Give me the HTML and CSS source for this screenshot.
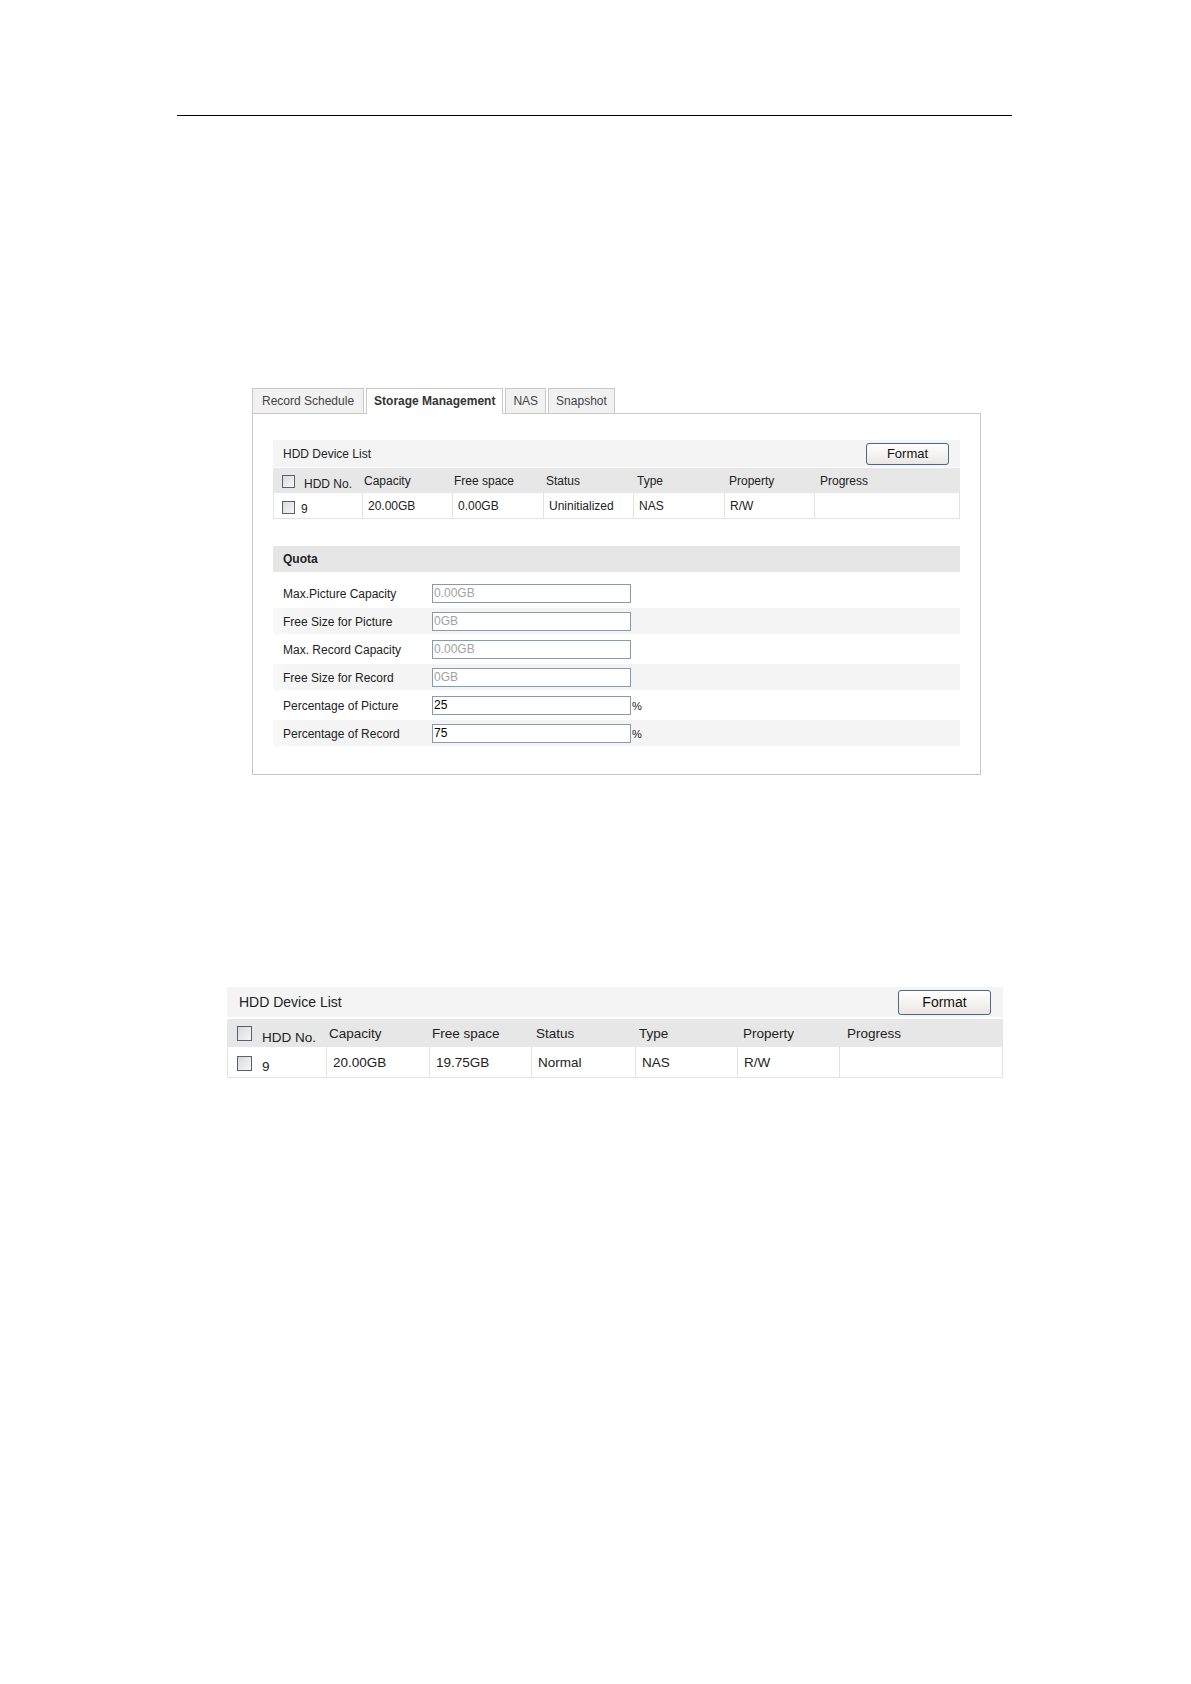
FILE: index.html
```html
<!DOCTYPE html>
<html>
<head>
<meta charset="utf-8">
<title>Storage Management</title>
<link rel="stylesheet" href="styles.css">
</head>
<body>
<div class="page">
  <hr class="rule">

  <div class="fig1">
    <div class="tabs">
      <div class="tab first">Record Schedule</div>
      <div class="tab active">Storage Management</div>
      <div class="tab">NAS</div>
      <div class="tab">Snapshot</div>
    </div>
    <div class="panel">
      <div class="devlist">
        <div class="dl-head">
          <span class="dl-title">HDD Device List</span>
          <button class="btn">Format</button>
        </div>
        <div class="dl-th">
          <div class="c c1"><span class="cb"></span><span class="hddno">HDD No.</span></div>
          <div class="c">Capacity</div>
          <div class="c">Free space</div>
          <div class="c">Status</div>
          <div class="c">Type</div>
          <div class="c">Property</div>
          <div class="c">Progress</div>
        </div>
        <div class="dl-td">
          <div class="c c1"><span class="cb"></span><span class="num">9</span></div>
          <div class="c">20.00GB</div>
          <div class="c">0.00GB</div>
          <div class="c">Uninitialized</div>
          <div class="c">NAS</div>
          <div class="c">R/W</div>
          <div class="c"></div>
        </div>
      </div>

      <div class="quota">
        <div class="q-head">Quota</div>
        <div class="q-rows">
          <div class="q-row"><span class="q-label">Max.Picture Capacity</span><input class="q-input" value="0.00GB" disabled></div>
          <div class="q-row alt"><span class="q-label">Free Size for Picture</span><input class="q-input" value="0GB" disabled></div>
          <div class="q-row"><span class="q-label">Max. Record Capacity</span><input class="q-input" value="0.00GB" disabled></div>
          <div class="q-row alt"><span class="q-label">Free Size for Record</span><input class="q-input" value="0GB" disabled></div>
          <div class="q-row"><span class="q-label">Percentage of Picture</span><input class="q-input" value="25"><span class="pct">%</span></div>
          <div class="q-row alt"><span class="q-label">Percentage of Record</span><input class="q-input" value="75"><span class="pct">%</span></div>
        </div>
      </div>
    </div>
  </div>

  <div class="fig2">
    <div class="devlist lg">
      <div class="dl-head">
        <span class="dl-title">HDD Device List</span>
        <button class="btn">Format</button>
      </div>
      <div class="dl-th">
        <div class="c c1"><span class="cb"></span><span class="hddno">HDD No.</span></div>
        <div class="c">Capacity</div>
        <div class="c">Free space</div>
        <div class="c">Status</div>
        <div class="c">Type</div>
        <div class="c">Property</div>
        <div class="c">Progress</div>
      </div>
      <div class="dl-td">
        <div class="c c1"><span class="cb"></span><span class="num">9</span></div>
        <div class="c">20.00GB</div>
        <div class="c">19.75GB</div>
        <div class="c">Normal</div>
        <div class="c">NAS</div>
        <div class="c">R/W</div>
        <div class="c"></div>
      </div>
    </div>
  </div>
</div>
</body>
</html>
```

FILE: styles.css
```css
html, body {
  margin: 0;
  padding: 0;
  background: #ffffff;
}

body {
  font-family: "Liberation Sans", Arial, sans-serif;
  color: #222222;
}

.page {
  width: 1191px;
  min-height: 1684px;
  overflow: hidden;
}

.rule {
  margin: 115px 0 0 177px;
  width: 835px;
  height: 0;
  border: 0;
  border-top: 1px solid #000000;
}

/* ---------- figure 1 ---------- */
.fig1 {
  margin: 272px 0 0 252px;
  width: 729px;
}

.tabs {
  display: flex;
  align-items: flex-end;
  gap: 2px;
  height: 25px;
}

.tab {
  height: 24px;
  line-height: 25px;
  padding: 0 7px;
  border: 1px solid #c9c9c9;
  border-bottom: 0;
  background: #f1f1f1;
  color: #444444;
  font-size: 12px;
  white-space: nowrap;
}

.tab.first {
  padding: 0 9px;
}

.tab.active {
  height: 25px;
  margin-bottom: -1px;
  background: #ffffff;
  color: #333333;
  font-weight: bold;
  position: relative;
  z-index: 1;
}

.panel {
  box-sizing: border-box;
  width: 729px;
  border: 1px solid #c9c9c9;
  padding: 26px 20px 28px 20px;
}

/* ---------- device list ---------- */
.devlist {
  font-size: 12px;
  --th-cols: 91px 90px 92px 91px 92px 91px 1fr;
  --td-cols: 89px 90px 91px 90px 91px 90px 1fr;
}

.dl-head {
  display: flex;
  align-items: center;
  justify-content: space-between;
  height: 27px;
  background: #f4f4f4;
  padding: 0 11px 0 10px;
}

.btn {
  box-sizing: border-box;
  width: 83px;
  height: 22px;
  margin: 0;
  padding: 0;
  border: 1px solid #4a6888;
  border-radius: 3px;
  background: linear-gradient(#ffffff, #f3f1ee 60%, #e9e6e2);
  font-family: "Liberation Sans", Arial, sans-serif;
  font-size: 13px;
  color: #111111;
}

.dl-th {
  margin-top: 1px;
  height: 25px;
  background: #e7e7e7;
  display: grid;
  grid-template-columns: var(--th-cols);
  align-items: center;
}

.dl-th .c1 {
  display: flex;
  align-items: center;
  padding-left: 9px;
}

.dl-th .cb {
  margin-top: 1px;
}

.hddno {
  margin-left: 9px;
  margin-top: 6px;
  white-space: nowrap;
}

.dl-td {
  box-sizing: border-box;
  height: 26px;
  display: grid;
  grid-template-columns: var(--td-cols);
  border: 1px solid #e3e3e3;
  border-top: 0;
  background: #ffffff;
}

.dl-td .c {
  display: flex;
  align-items: center;
  padding-left: 5px;
  border-right: 1px solid #e3e3e3;
  white-space: nowrap;
}

.dl-td .c:last-child {
  border-right: 0;
}

.dl-td .c1 {
  padding-left: 8px;
}

.num {
  margin-left: 6px;
  margin-top: 6px;
}

.cb {
  box-sizing: border-box;
  width: 13px;
  height: 13px;
  flex: none;
  border: 1px solid #56616d;
  background: linear-gradient(135deg, #d6d9dc, #f7f7f7);
}

.dl-td .cb {
  margin-top: 3px;
}

/* ---------- quota ---------- */
.quota {
  margin-top: 27px;
  font-size: 12px;
}

.q-head {
  height: 26px;
  display: flex;
  align-items: center;
  padding-left: 10px;
  background: #e6e6e6;
  font-weight: bold;
}

.q-rows {
  margin-top: 8px;
  display: flex;
  flex-direction: column;
  gap: 2px;
}

.q-row {
  height: 26px;
  display: flex;
  align-items: center;
  padding-left: 10px;
}

.q-row.alt {
  background: linear-gradient(90deg, #f8f8f8, #f4f4f4 30px);
}

.q-label {
  width: 149px;
  padding-top: 2px;
  white-space: nowrap;
}

.q-input {
  box-sizing: border-box;
  width: 199px;
  height: 19px;
  margin: 0;
  padding: 0 1px;
  border: 1px solid #7f9db9;
  border-radius: 0;
  background: #ffffff;
  font-family: "Liberation Sans", Arial, sans-serif;
  font-size: 12px;
  color: #000000;
  outline: none;
}

.q-input:disabled {
  color: #a3a3a3;
  background: #ffffff;
}

.pct {
  margin-left: 1px;
  padding-top: 2px;
  font-size: 11px;
}

/* ---------- figure 2 (enlarged) ---------- */
.fig2 {
  margin: 212px 0 0 227px;
  width: 776px;
}

.devlist.lg {
  font-size: 13.5px;
  --th-cols: 102px 103px 104px 103px 104px 104px 1fr;
  --td-cols: 99px 103px 102px 104px 102px 102px 1fr;
}

.lg .dl-head {
  height: 30px;
  padding: 0 12px 0 12px;
}

.lg .dl-title {
  font-size: 14px;
}

.lg .btn {
  width: 93px;
  height: 25px;
  font-size: 14px;
}

.lg .dl-th {
  margin-top: 2px;
  height: 28px;
}

.lg .dl-th .c1 {
  padding-left: 10px;
}

.lg .hddno {
  margin-left: 10px;
  margin-top: 8px;
}

.lg .dl-td {
  height: 31px;
}

.lg .dl-td .c {
  padding-left: 6px;
}

.lg .dl-td .c1 {
  padding-left: 9px;
}

.lg .num {
  margin-left: 10px;
  margin-top: 9px;
}

.lg .cb {
  width: 15px;
  height: 15px;
}
```
